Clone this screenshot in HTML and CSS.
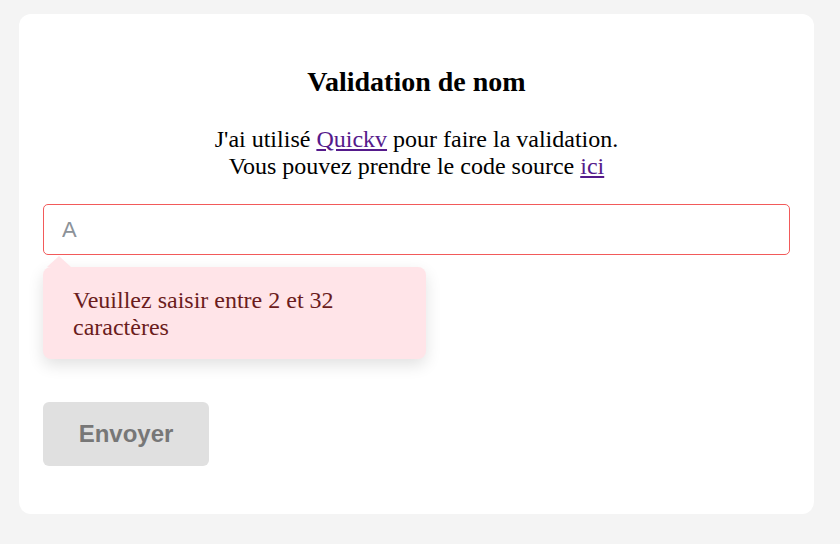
FILE: index.html
```html
<!DOCTYPE html>
<html lang="fr">
<head>
<meta charset="utf-8">
<link rel="stylesheet" href="styles.css">
</head>
<body>
<div class="page">
  <form class="card">
    <h2 class="title">Validation de nom</h2>
    <p class="intro">J'ai utilisé <a href="#">Quickv</a> pour faire la validation.<br>Vous pouvez prendre le code source <a href="#">ici</a></p>
    <div class="field">
      <input class="input" type="text" placeholder="A">
      <div class="tip">Veuillez saisir entre 2 et 32 caractères</div>
    </div>
    <button class="btn" type="button">Envoyer</button>
  </form>
</div>
</body>
</html>
```
FILE: styles.css
```css
html, body { margin: 0; padding: 0; }
body {
  background: #f4f4f4;
  font-family: "Liberation Serif", "Times New Roman", serif;
  width: 840px;
  height: 544px;
  overflow: hidden;
}
.page { padding: 14px 26px 30px 19px; }
.card {
  background: #fff;
  border-radius: 12px;
  padding: 50px 24px 48px 24px;
  display: flex;
  flex-direction: column;
}
.title {
  margin: 0;
  text-align: center;
  font-size: 28px;
  line-height: 36px;
  font-weight: bold;
  color: #000;
}
.intro {
  margin: 26px 0 0;
  text-align: center;
  font-size: 24px;
  line-height: 27px;
  color: #000;
}
.intro a { color: #551a8b; }
.field {
  position: relative;
  margin-top: 24px;
}
.input {
  box-sizing: border-box;
  width: 100%;
  height: 51px;
  border: 1px solid #f25a5a;
  border-radius: 5px;
  padding: 0 18px;
  font-family: "Liberation Sans", Arial, sans-serif;
  font-size: 22px;
  outline: none;
  display: block;
}
.input::placeholder { color: #8c9299; }
.tip {
  margin-top: 12px;
  width: 383px;
  box-sizing: border-box;
  background: #ffe4e8;
  border-radius: 8px;
  padding: 20px 50px 18px 30px;
  font-size: 24px;
  line-height: 27px;
  color: #6b1c1c;
  box-shadow: 0 6px 16px rgba(0,0,0,0.12);
  position: relative;
}
.tip::before {
  content: "";
  position: absolute;
  left: 4px;
  top: -11px;
  border-left: 12px solid transparent;
  border-right: 12px solid transparent;
  border-bottom: 11px solid #ffe4e8;
}
.btn {
  margin-top: 43px;
  align-self: flex-start;
  width: 166px;
  height: 64px;
  border: none;
  border-radius: 6px;
  background: #e0e0e0;
  color: #777;
  font-family: "Liberation Sans", Arial, sans-serif;
  font-weight: bold;
  font-size: 24px;
}
```
